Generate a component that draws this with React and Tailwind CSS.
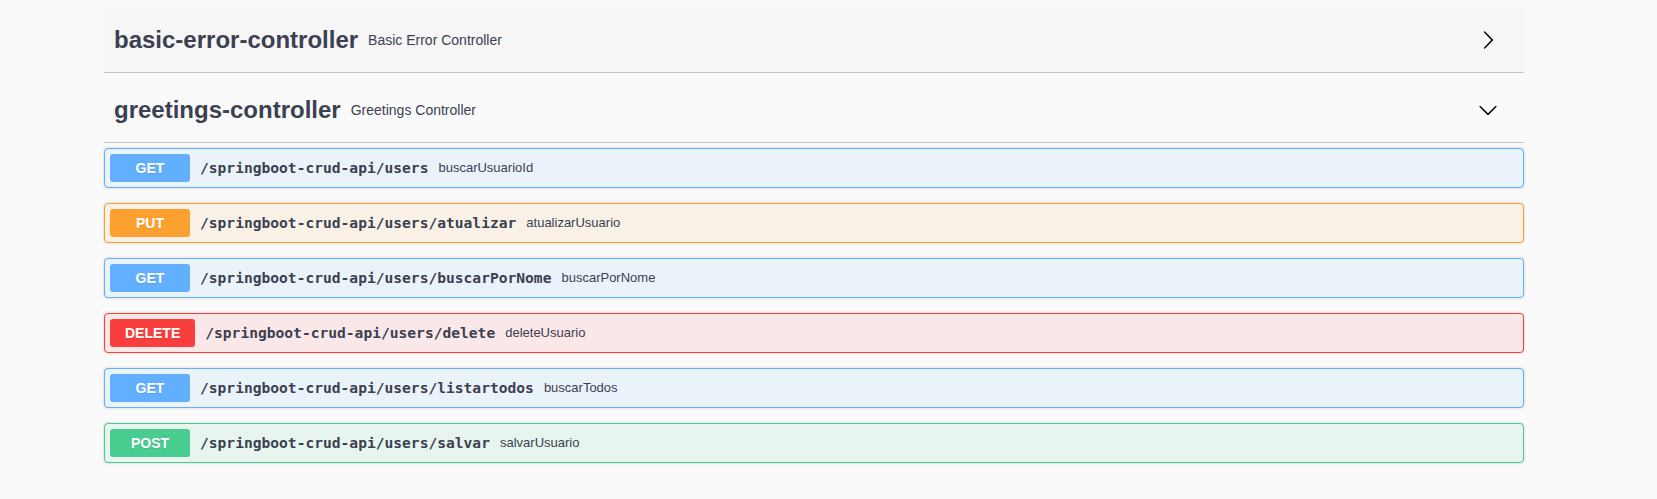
import React from "react";

const ops = [
  { m: "GET", path: "/springboot-crud-api/users", sum: "buscarUsuarioId" },
  { m: "PUT", path: "/springboot-crud-api/users/atualizar", sum: "atualizarUsuario" },
  { m: "GET", path: "/springboot-crud-api/users/buscarPorNome", sum: "buscarPorNome" },
  { m: "DELETE", path: "/springboot-crud-api/users/delete", sum: "deleteUsuario" },
  { m: "GET", path: "/springboot-crud-api/users/listartodos", sum: "buscarTodos" },
  { m: "POST", path: "/springboot-crud-api/users/salvar", sum: "salvarUsuario" },
];

const styles = {
  GET: { box: "bg-[#ebf3fa] border-[#61affe]", badge: "bg-[#61affe]" },
  PUT: { box: "bg-[#faf1e6] border-[#fca130]", badge: "bg-[#fca130]" },
  DELETE: { box: "bg-[#fae7e7] border-[#f93e3e]", badge: "bg-[#f93e3e]" },
  POST: { box: "bg-[#e8f5ef] border-[#49cc90]", badge: "bg-[#49cc90]" },
};

function ArrowRight() {
  return (
    <svg width="20" height="20" viewBox="0 0 20 20" className="shrink-0">
      <path
        fill="#000"
        d="M13.25 10L6.109 2.58a.697.697 0 0 1 0-.979.68.68 0 0 1 .969 0l7.83 7.908a.697.697 0 0 1 0 .979l-7.83 7.908a.68.68 0 0 1-.969 0 .697.697 0 0 1 0-.979L13.25 10z"
      />
    </svg>
  );
}

function ArrowDown() {
  return (
    <svg width="20" height="20" viewBox="0 0 20 20" className="shrink-0">
      <path
        fill="#000"
        d="M17.418 6.109c.272-.268.709-.268.979 0s.271.701 0 .969l-7.908 7.83c-.27.268-.707.268-.979 0l-7.908-7.83c-.27-.268-.27-.701 0-.969.271-.268.709-.268.979 0L10 13.25l7.418-7.141z"
      />
    </svg>
  );
}

function Tag({ title, desc, open, hover, className }) {
  return (
    <div
      className={`flex items-center border-b border-[#c1c3c7] pl-[10px] pr-[26px] ${
        hover ? "bg-[#f6f6f6]" : ""
      } ${className}`}
    >
      <span className="text-[24px] font-bold leading-none text-[#3b4151]">{title}</span>
      <span className="px-[10px] text-[14px] leading-none text-[#3b4151]">{desc}</span>
      <div className="ml-auto flex items-center">{open ? <ArrowDown /> : <ArrowRight />}</div>
    </div>
  );
}

export default function App() {
  return (
    <div
      className="min-h-[499px] w-full bg-[#fafafa] pt-[8px] text-[#3b4151]"
      style={{ fontFamily: '"Liberation Sans", Arial, sans-serif' }}
    >
      <div className="ml-[104px] w-[1420px]">
        <Tag
          title="basic-error-controller"
          desc="Basic Error Controller"
          hover
          className="h-[65px]"
        />
        <Tag
          title="greetings-controller"
          desc="Greetings Controller"
          open
          className="mt-[5px] h-[65px]"
        />
        <div className="mt-[5px] flex flex-col gap-[15px]">
          {ops.map((o, i) => (
            <div
              key={i}
              className={`flex h-[40px] items-center rounded-[4px] border px-[5px] shadow-[0_0_3px_rgba(0,0,0,0.19)] ${styles[o.m].box}`}
            >
              <div
                className={`min-w-[80px] rounded-[3px] px-[15px] py-[6px] text-center text-[14px] font-bold leading-[16px] text-white [text-shadow:0_1px_0_rgba(0,0,0,0.1)] ${styles[o.m].badge}`}
              >
                {o.m}
              </div>
              <span
                className="px-[10px] text-[14.6px] font-bold text-[#3b4151]"
                style={{ fontFamily: '"DejaVu Sans Mono", monospace' }}
              >
                {o.path}
              </span>
              <span className="text-[13px] text-[#3b4151]">{o.sum}</span>
            </div>
          ))}
        </div>
      </div>
    </div>
  );
}
